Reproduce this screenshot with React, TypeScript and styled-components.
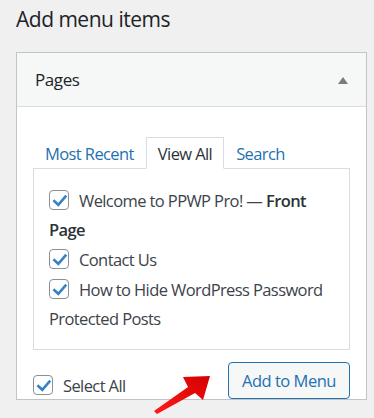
import React from "react";
import styled, { createGlobalStyle } from "styled-components";

const Global = createGlobalStyle`
  html, body { margin: 0; padding: 0; background: #f0f0f1; }
  body { font-family: "Open Sans", "Noto Sans", sans-serif; color: #3c434a; }
  * { box-sizing: border-box; }
`;

const Page = styled.div`
  padding: 6px 7px 0 16px;
  width: 374px;
  height: 418px;
  overflow: hidden;
`;

const Title = styled.h2`
  margin: 0 0 19px;
  font-size: 21px;
  line-height: 27px;
  font-weight: 400;
  letter-spacing: -0.5px;
  color: #1d2327;
`;

const Panel = styled.div`
  border: 1px solid #c3c4c7;
  background: #fff;
`;

const PanelHeader = styled.div`
  height: 54px;
  background: #f6f7f7;
  border-bottom: 1px solid #dcdcde;
  display: flex;
  align-items: center;
  justify-content: space-between;
  padding: 0 18px 0 18px;
`;

const PanelTitle = styled.h3`
  margin: 0;
  font-size: 17px;
  font-weight: 400;
  letter-spacing: -0.4px;
  color: #1d2327;
`;

const Toggle = styled.span`
  width: 0;
  height: 0;
  border-left: 5px solid transparent;
  border-right: 5px solid transparent;
  border-bottom: 7px solid #787c82;
  margin-top: 1px;
`;

const PanelBody = styled.div`
  padding: 30px 16px 0 16px;
  position: relative;
`;

const Tabs = styled.ul`
  list-style: none;
  margin: 0 0 -1px;
  padding: 0;
  display: flex;
  position: relative;
  z-index: 1;
`;

const Tab = styled.li<{ $active?: boolean }>`
  height: 32px;
  padding: 3px 11px 0;
  border: 1px solid ${(p) => (p.$active ? "#dcdcde" : "transparent")};
  border-bottom-color: ${(p) => (p.$active ? "#fff" : "transparent")};
  background: ${(p) => (p.$active ? "#fff" : "transparent")};
  font-size: 16.5px;
  letter-spacing: -0.6px;
  line-height: 26px;
  color: ${(p) => (p.$active ? "#2c3338" : "#2271b1")};
`;

const TabBox = styled.div`
  border: 1px solid #dcdcde;
  padding: 17px 15px 15px;
  height: 182px;
`;

const Checklist = styled.ul`
  list-style: none;
  margin: 0;
  padding: 0;
`;

const Item = styled.li`
  font-size: 16.5px;
  letter-spacing: -0.6px;
  line-height: 29px;
  margin-bottom: 1px;
  color: #3c434a;
`;

const Box = styled.span`
  display: inline-block;
  width: 20px;
  height: 20px;
  border: 1px solid #8c8f94;
  border-radius: 4px;
  background: #fff;
  vertical-align: middle;
  margin: -6px 10px 0 0;
  position: relative;
  svg { position: absolute; left: 1px; top: 1px; }
`;

const Strong = styled.b`
  font-weight: 600;
  color: #2c3338;
`;

const Footer = styled.div`
  display: flex;
  justify-content: space-between;
  align-items: flex-start;
  padding-top: 12px;
  position: relative;
`;

const SelectAll = styled.label`
  margin-top: 11px;
  display: flex;
  align-items: center;
  font-size: 16.5px;
  letter-spacing: -0.6px;
  color: #3c434a;
  line-height: 20px;
  ${Box} { margin: 0 10px 0 0; }
`;

const SelectText = styled.span`
  padding-top: 3px;
`;

const Button = styled.button`
  width: 122px;
  height: 37px;
  border: 1px solid #2271b1;
  border-radius: 4px;
  background: #f6f7f7;
  color: #2271b1;
  font-family: inherit;
  font-size: 16.5px;
  letter-spacing: -0.5px;
  padding: 0;
  line-height: 33px;
`;

const Arrow = styled.svg`
  position: absolute;
  left: 0;
  top: 0;
  overflow: visible;
  pointer-events: none;
`;

const Check = () => (
  <svg width="18" height="18" viewBox="0 0 18 18">
    <path d="M3.4 9.2 L7.3 12.8 L14.4 4.6" fill="none" stroke="#3582c4" strokeWidth="2.6" strokeLinecap="square" strokeLinejoin="miter" />
  </svg>
);

const Checkbox = () => (
  <Box>
    <Check />
  </Box>
);

export default function App() {
  return (
    <>
      <Global />
      <Page>
        <Title>Add menu items</Title>
        <Panel>
          <PanelHeader>
            <PanelTitle>Pages</PanelTitle>
            <Toggle />
          </PanelHeader>
          <PanelBody>
            <Tabs>
              <Tab>Most Recent</Tab>
              <Tab $active>View All</Tab>
              <Tab>Search</Tab>
            </Tabs>
            <TabBox>
              <Checklist>
                <Item>
                  <Checkbox />
                  Welcome to PPWP Pro! — <Strong>Front Page</Strong>
                </Item>
                <Item>
                  <Checkbox />
                  Contact Us
                </Item>
                <Item>
                  <Checkbox />
                  How to Hide WordPress Password Protected Posts
                </Item>
              </Checklist>
            </TabBox>
            <Footer>
              <SelectAll>
                <Checkbox />
                <SelectText>Select All</SelectText>
              </SelectAll>
              <Button>Add to Menu</Button>
              <Arrow width="200" height="80" viewBox="0 0 200 80">
                <defs>
                  <linearGradient id="ag" x1="0" y1="1" x2="1" y2="0">
                    <stop offset="0" stopColor="#ff1a1a" />
                    <stop offset="1" stopColor="#d40000" />
                  </linearGradient>
                </defs>
                <polygon
                  points="121,61 155,37 150,27 177,26 170,50 162,43 124,64"
                  fill="url(#ag)"
                />
              </Arrow>
            </Footer>
          </PanelBody>
        </Panel>
      </Page>
    </>
  );
}
